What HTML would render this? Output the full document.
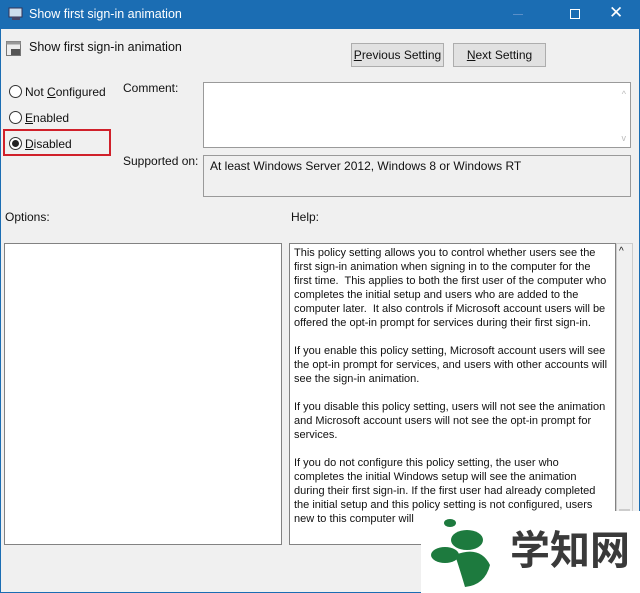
<!DOCTYPE html><html><head><style>
*{margin:0;padding:0;box-sizing:border-box}
body{width:640px;height:593px;overflow:hidden;background:#f0f0f0;font-family:"Liberation Sans",sans-serif;font-size:12px;color:#111;position:relative}
.a{position:absolute}
.tb{left:0;top:0;width:640px;height:29px;background:#1b6db3;color:#fff}
.box{background:#fff;border:1px solid #9a9a9a}
.btn{background:#e1e1e1;border:1px solid #adadad;text-align:center;line-height:22px}
.rad{width:13px;height:13px;border:1px solid #333;border-radius:50%;background:#fff}
.help{font-size:11px;line-height:14px;white-space:nowrap}
</style></head><body>
<div class="a" style="left:0;top:0;width:640px;height:593px;border:1px solid #1b6db3"></div>
<div class="a tb">
 <svg class="a" style="left:8px;top:7px" width="16" height="14"><rect x="1" y="1" width="13" height="9" fill="#cde" stroke="#335"/><rect x="4" y="10" width="8" height="3" fill="#446"/></svg>
 <div class="a" style="left:29px;top:7px;font-size:12.5px">Show first sign-in animation</div>
 <div class="a" style="left:513px;top:14px;width:10px;height:1px;background:#5a8fc8"></div>
 <div class="a" style="left:570px;top:9px;width:10px;height:10px;border:1px solid #fff"></div>
 <div class="a" style="left:609px;top:3px;font-size:17px">✕</div>
</div>
<svg class="a" style="left:6px;top:41px" width="16" height="16"><rect x="0.5" y="0.5" width="14" height="14" fill="#eee" stroke="#777"/><rect x="0.5" y="0.5" width="14" height="3" fill="#999"/><rect x="5" y="8" width="9" height="6" fill="#555"/></svg>
<div class="a" style="left:29px;top:40px;font-size:12.5px">Show first sign-in animation</div>
<div class="a btn" style="left:351px;top:43px;width:93px;height:24px"><u>P</u>revious Setting</div>
<div class="a btn" style="left:453px;top:43px;width:93px;height:24px"><u>N</u>ext Setting</div>
<div class="a rad" style="left:9px;top:85px"></div><div class="a" style="left:25px;top:85px">Not <u>C</u>onfigured</div>
<div class="a rad" style="left:9px;top:111px"></div><div class="a" style="left:25px;top:111px"><u>E</u>nabled</div>
<div class="a rad" style="left:9px;top:137px"><div class="a" style="left:2px;top:2px;width:7px;height:7px;border-radius:50%;background:#222"></div></div><div class="a" style="left:25px;top:137px"><u>D</u>isabled</div>
<div class="a" style="left:3px;top:129px;width:108px;height:27px;border:2px solid #d0202a"></div>
<div class="a" style="left:123px;top:81px">Comment:</div>
<div class="a" style="left:123px;top:154px">Supported on:</div>
<div class="a box" style="left:203px;top:82px;width:428px;height:66px"><div class="a" style="right:4px;top:6px;color:#bbb;font-size:9px">^</div><div class="a" style="right:4px;bottom:4px;color:#bbb;font-size:9px">v</div></div>
<div class="a" style="left:203px;top:155px;width:428px;height:42px;border:1px solid #9a9a9a;background:#f0f0f0"><div class="a" style="left:6px;top:3px">At least Windows Server 2012, Windows 8 or Windows RT</div></div>
<div class="a" style="left:5px;top:210px">Options:</div>
<div class="a" style="left:291px;top:210px">Help:</div>
<div class="a box" style="left:4px;top:243px;width:278px;height:302px;border-color:#828282"></div>
<div class="a box" style="left:289px;top:243px;width:327px;height:302px;border-color:#828282"></div>
<div class="a" style="left:616px;top:243px;width:17px;height:302px;background:#f0f0f0;border:1px solid #ccc"><div class="a" style="left:2px;top:2px;font-size:10px">^</div><div class="a" style="left:2px;top:265px;width:11px;height:30px;background:#cdcdcd"></div></div>
<div class="a help" style="left:294px;top:246px">This policy setting allows you to control whether users see the<br>first sign-in animation when signing in to the computer for the<br>first time.&nbsp; This applies to both the first user of the computer who<br>completes the initial setup and users who are added to the<br>computer later.&nbsp; It also controls if Microsoft account users will be<br>offered the opt-in prompt for services during their first sign-in.<br><br>If you enable this policy setting, Microsoft account users will see<br>the opt-in prompt for services, and users with other accounts will<br>see the sign-in animation.<br><br>If you disable this policy setting, users will not see the animation<br>and Microsoft account users will not see the opt-in prompt for<br>services.<br><br>If you do not configure this policy setting, the user who<br>completes the initial Windows setup will see the animation<br>during their first sign-in. If the first user had already completed<br>the initial setup and this policy setting is not configured, users<br>new to this computer will</div>
<div class="a" style="left:421px;top:511px;width:219px;height:82px;background:#fff"></div>
<svg class="a" style="left:425px;top:515px" width="80" height="75"><ellipse cx="42" cy="25" rx="16" ry="10" fill="#1d7a3e"/><ellipse cx="20" cy="40" rx="14" ry="8" fill="#1d7a3e"/><path d="M30 40 Q55 30 65 50 Q60 70 40 72 Q35 55 30 40Z" fill="#1d7a3e"/><ellipse cx="25" cy="8" rx="6" ry="4" fill="#1d7a3e"/></svg>
<div class="a" style="left:510px;top:523px;font-family:'Noto Sans CJK SC',sans-serif;font-size:40px;font-weight:bold;color:#3a3a3a;line-height:48px">学知网</div>
</body></html>
